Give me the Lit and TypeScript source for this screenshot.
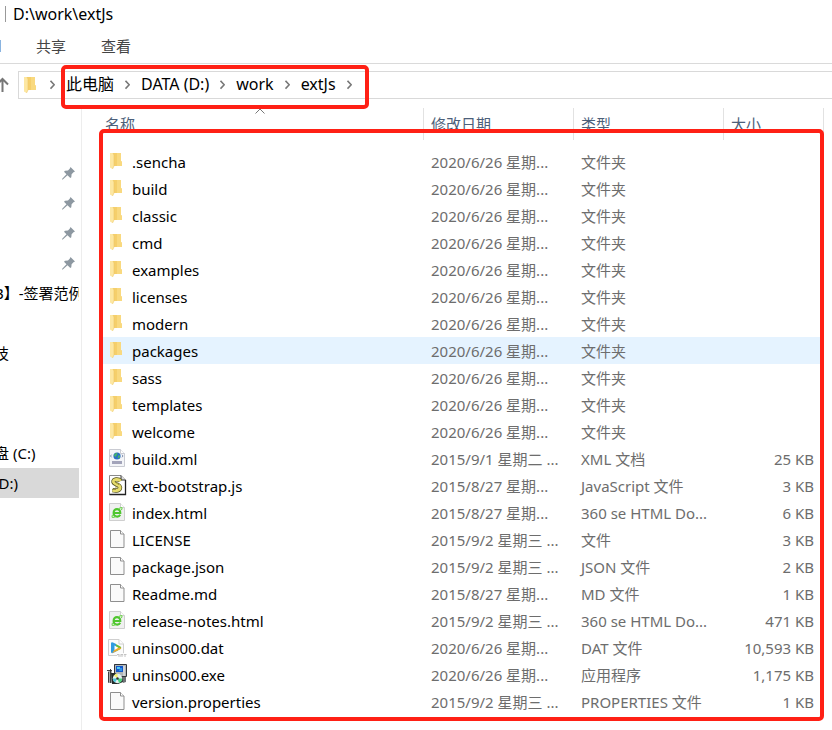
import { LitElement, html, css, svg, TemplateResult } from "lit";
import { customElement, property } from "lit/decorators.js";
import { classMap } from "lit/directives/class-map.js";

type Kind = "folder" | "xml" | "js" | "html" | "file" | "media" | "exe";

interface Entry {
  name: string;
  date: string;
  type: string;
  size?: string;
  kind: Kind;
  hover?: boolean;
}

const folder = (name: string, hover = false): Entry => ({
  name, date: "2020/6/26 星期...", type: "文件夹", kind: "folder", hover,
});

const ENTRIES: Entry[] = [
  folder(".sencha"),
  folder("build"),
  folder("classic"),
  folder("cmd"),
  folder("examples"),
  folder("licenses"),
  folder("modern"),
  folder("packages", true),
  folder("sass"),
  folder("templates"),
  folder("welcome"),
  { name: "build.xml", date: "2015/9/1 星期二 ...", type: "XML 文档", size: "25 KB", kind: "xml" },
  { name: "ext-bootstrap.js", date: "2015/8/27 星期...", type: "JavaScript 文件", size: "3 KB", kind: "js" },
  { name: "index.html", date: "2015/8/27 星期...", type: "360 se HTML Do...", size: "6 KB", kind: "html" },
  { name: "LICENSE", date: "2015/9/2 星期三 ...", type: "文件", size: "3 KB", kind: "file" },
  { name: "package.json", date: "2015/9/2 星期三 ...", type: "JSON 文件", size: "2 KB", kind: "file" },
  { name: "Readme.md", date: "2015/8/27 星期...", type: "MD 文件", size: "1 KB", kind: "file" },
  { name: "release-notes.html", date: "2015/9/2 星期三 ...", type: "360 se HTML Do...", size: "471 KB", kind: "html" },
  { name: "unins000.dat", date: "2020/6/26 星期...", type: "DAT 文件", size: "10,593 KB", kind: "media" },
  { name: "unins000.exe", date: "2020/6/26 星期...", type: "应用程序", size: "1,175 KB", kind: "exe" },
  { name: "version.properties", date: "2015/9/2 星期三 ...", type: "PROPERTIES 文件", size: "1 KB", kind: "file" },
];

const sheet = (stroke: string, fill: string) => svg`
  <path d="M2.5 1.5H13.5L17.5 5.5V18.5H2.5Z" fill=${fill} stroke=${stroke}/>
  <path d="M13.5 1.5V5.5H17.5" fill="#fff" stroke=${stroke}/>`;

const ICONS: Record<Kind, TemplateResult> = {
  folder: svg`
    <path d="M6 2H14V10L15 11V15H6Z" fill="#f5cf6b"/>
    <path d="M10 2H14V10L15 11V15H10Z" fill="#f9d97f"/>
    <path d="M3 2H6L7 4V15L5.500 18L3 16.500Z" fill="#fde7a2"/>
    <path d="M6 2L7 4V15L5.500 18" fill="none" stroke="#efc765" stroke-width=".6"/>`,
  xml: svg`
    ${sheet("#c9cbd2", "#f4f5f8")}
    <circle cx="10" cy="8" r="3.600" fill="#2b6fc4"/>
    <path d="M8 5.500L10.500 4.700L10 7L8.500 9L6.800 7.500ZM11.500 7L13.300 8L12 10.500L10.500 9.500Z" fill="#45b26c"/>
    <path d="M4.500 6.700L3.500 8L4.500 9.300M15 6.700L16 8L15 9.300" fill="none" stroke="#7f8fae"/>
    <path d="M5 13H15V16H5Z" fill="#a3a4ba"/>`,
  js: svg`
    <path d="M2.500.5H14L18.500 5V19.500H2.500Z" fill="#fff" stroke="#8a8a8a"/>
    <path d="M18.500 5V19.500H2.500" fill="none" stroke="#222" stroke-width="1.300"/>
    <path d="M14 .5V5H18.500" fill="#ddd" stroke="#333"/>
    <path d="M13.500 6C11.500 3.500 6 4 6.500 7C7 9.500 13 9.500 13 12.500C13 15.500 9.500 16 5.500 15.200" fill="none" stroke="#55531f" stroke-width="4.400"/>
    <path d="M13.500 6C11.500 3.500 6 4 6.500 7C7 9.500 13 9.500 13 12.500C13 15.500 9.500 16 5.500 15.200" fill="none" stroke="#e6dc6c" stroke-width="3"/>
    <path d="M8 7L12 9.800M8 12H11M5 14.500H9" stroke="#8a8438" stroke-width=".8"/>`,
  html: svg`
    ${sheet("#cfcfcf", "#f0f0f0")}
    <path d="M6.800 11H13.300C13.300 5.800 6.600 5.800 6.600 11C6.600 15.200 11.800 15.600 13.200 12.800" fill="none" stroke="#4fc62f" stroke-width="2.100"/>
    <path d="M5.500 13C4 16.500 7 15.500 8.500 14.500M12 6.500C15.500 4.500 15.500 6 14.300 8" fill="none" stroke="#6fd64e" stroke-width="1.100"/>`,
  file: svg`
    <path d="M3.500 1.500H13.500L17 5V18.500H3.500Z" fill="#fafafa" stroke="#8f8f8f"/>
    <path d="M13.500 1.500V5H17" fill="#fff" stroke="#8f8f8f"/>`,
  media: svg`
    <path d="M1.500 2.500H12L16.500 7V18.500H1.500Z" fill="#fbfbfb" stroke="#cfcfcf"/>
    <path d="M12 2.500V7H16.500" fill="#fff" stroke="#cfcfcf"/>
    <path d="M4 6.500Q4 4.800 6 5.400L9 7V14.400L6 16Q4 16.600 4 15Z" fill="#2f9be0"/>
    <path d="M6 5.400L13.500 9.500Q15 10.700 13.500 12L9 14.400V7Z" fill="#69bb3b"/>
    <path d="M5 16.200L13.500 12Q14.600 11.200 14.300 10.700L9 10.700Z" fill="#f2a92c"/>
    <path d="M7.500 8.500L11.300 10.700L7.500 13Z" fill="#fff"/>
    <path d="M10 16H20V20H10Z" fill="#fff" opacity=".8"/>
    <path d="M10 17.500H12.500M13.500 17.500H16M17 17.500H19.500M11 19H16M17 19H19" stroke="#c3c3c3"/>`,
  exe: svg`
    <path d="M7 0H19V12H7Z" fill="#aeb4b8"/>
    <path d="M7.500.5H19.500V12.500H7.500Z" fill="none" stroke="#30343a"/>
    <path d="M9 2H16V8H9Z" fill="#1257c8"/>
    <path d="M10 3H13V5H10Z" fill="#50cdf4"/>
    <path d="M13 4H15V7H12Z" fill="#2d93e8"/>
    <path d="M17 2V12" stroke="#f0f0f0"/>
    <path d="M1 7H5V19H1Z" fill="#a4a7aa"/>
    <path d="M0 6.500H5M3.500 5V19M1.500 8V18.500" stroke="#333" stroke-width=".9"/>
    <path d="M4 9H8L14 13H16V18L11 20H5Z" fill="#242a29"/>
    <circle cx="10.500" cy="14.500" r="4.700" fill="#e4f0ef"/>
    <path d="M10.500 14.500L7 11.400A4.700 4.700 0 0 1 10.500 9.800Z" fill="#f5ef64"/>
    <path d="M10.500 14.500L15.200 14.500A4.700 4.700 0 0 1 12 19Z" fill="#47d77c"/>
    <path d="M10.500 14.500L8 18.500A4.700 4.700 0 0 1 5.800 14.500Z" fill="#4cc4d9"/>
    <circle cx="10.500" cy="14.500" r="1.200" fill="#333"/>
    <path d="M15 13H19V18L16 19Z" fill="#6d7276"/>`,
};

@customElement("file-icon")
export class FileIcon extends LitElement {
  @property() kind: Kind = "file";
  static styles = css`
    :host { display: block; flex: none; width: 20px; height: 21px; }
    .icon { display: block; }
  `;
  render() {
    return html`<svg class="icon" width="20" height="21" viewBox="0 0 20 21" aria-hidden="true">${ICONS[this.kind]}</svg>`;
  }
}

const chevron = html`<svg class="chevron" width="5" height="10" viewBox="0 0 5 10" aria-hidden="true">
  <path d="M.5 .8L4.200 4.700L.5 8.600" fill="none" stroke="#777" stroke-width="1.600"/></svg>`;

const pin = html`<svg width="13" height="13" viewBox="0 0 13 13" aria-hidden="true">
  <path d="M8.500 0L13 4.500L11.500 5.200L9.600 7.200L9.300 10.200L8.300 11L5.500 8.300L.8 12.600L0 12.500L.2 11.700L4.500 7.300L2 4.700L3 3.700L6 3.400L7.700 1.700Z" fill="#8d98a1"/></svg>`;

@customElement("app-root")
export class AppRoot extends LitElement {
  static styles = css`
    :host {
      display: flex;
      flex-direction: column;
      min-height: 100vh;
      overflow: hidden;
      background: #fff;
      color: #000;
      font: 15px/20px "Noto Sans", "Noto Sans CJK SC", sans-serif;
    }
    button {
      appearance: none;
      margin: 0;
      padding: 0;
      border: 0;
      background: none;
      color: inherit;
      font: inherit;
      text-align: left;
      white-space: nowrap;
    }
    .title {
      display: flex;
      align-items: center;
      box-sizing: border-box;
      gap: 7px;
      height: 28px;
      padding: 0 0 1px 5px;
    }
    .title-rule { width: 1px; height: 16px; background: #999; }
    .title-text { margin: 0; font-size: 16px; font-weight: 400; }
    .tabs {
      display: flex;
      align-items: center;
      gap: 35px;
      height: 35px;
      border-bottom: 1px solid #dadada;
      color: #444;
    }
    .tab-edge { width: 1px; height: 12px; background: #8ab4e0; }
    .address-row {
      display: flex;
      align-items: center;
      gap: 9px;
      padding: 7px 0 9px;
    }
    .up { flex: none; width: 9px; height: 16px; }
    .address {
      flex: 1;
      display: flex;
      align-items: center;
      gap: 11px;
      height: 26px;
      padding-left: 5px;
      border: 1px solid #d9d9d9;
      border-right: 0;
      font-size: 16px;
    }
    .crumbs {
      position: relative;
      display: flex;
      align-items: center;
      gap: 11px;
      height: 26px;
    }
    .crumb { padding-bottom: 2px; }
    .crumbs::after, .list::after {
      content: "";
      position: absolute;
      border: 4px solid #ff2015;
      border-radius: 5px;
      pointer-events: none;
    }
    .crumbs::after { inset: -7px -17px -11px -5px; }
    .chevron, .folder { flex: none; display: block; }
    .body { flex: 1; display: flex; }
    .nav {
      flex: none;
      width: 81px;
      padding-top: 50px;
      border-right: 1px solid #ededed;
    }
    .nav-item {
      display: flex;
      align-items: center;
      box-sizing: border-box;
      width: 79px;
      height: 30px;
      overflow: hidden;
      text-indent: -6px;
    }
    .nav-item.pinned { justify-content: flex-end; padding-right: 4px; }
    .nav-item.current { background: #d9d9d9; }
    .nav-group { margin-bottom: 30px; }
    .nav-group.far { margin-bottom: 70px; }
    .main { flex: 1; min-width: 0; padding: 0 8px 9px 21px; }
    .list { position: relative; }
    .list::after { inset: 21px 0 -6px -4px; }
    .table { width: 100%; border-collapse: collapse; table-layout: fixed; }
    .c-mid { width: 150px; }
    .c-size { width: 100px; }
    th { padding: 0 0 8px; font-weight: 400; }
    .head {
      position: relative;
      display: block;
      width: 100%;
      height: 32px;
      padding-left: 7px;
      border-right: 1px solid #e2e2e2;
      color: #4c607a;
    }
    .head.sorted { width: calc(100% + 6px); margin-left: -6px; padding-left: 8px; }
    .caret { position: absolute; top: 0; left: calc(50% - 5px); }
    td { height: 27px; padding: 0 0 0 7px; color: #6d6d6d; white-space: nowrap; }
    td.name { padding-left: 4px; color: #000; }
    td.size { padding-right: 10px; text-align: right; }
    tr.hover { background: #e5f3ff; }
    .file { display: flex; align-items: center; gap: 5px; }
  `;

  render() {
    return html`
      <header class="title"><span class="title-rule"></span><h1 class="title-text">D:\\work\\extJs</h1></header>
      <div class="tabs">
        <span class="tab-edge"></span><button>共享</button><button>查看</button>
      </div>
      <div class="address-row">
        <button class="up" aria-label="向上">
          <svg width="9" height="16" viewBox="0 0 9 16"><path d="M2.500 15V2M-3 7.500L2.500 2L8 7.500" fill="none" stroke="#777" stroke-width="2"/></svg>
        </button>
        <div class="address">
          <svg class="folder" width="15" height="20" viewBox="3 0 15 20" aria-hidden="true">${ICONS.folder}</svg>
          ${chevron}
          <nav class="crumbs" aria-label="路径">
            ${["此电脑", "DATA (D:)", "work", "extJs"].map((c) => html`<button class="crumb">${c}</button>${chevron}`)}
          </nav>
        </div>
      </div>
      <div class="body">
        <nav class="nav" aria-label="导航">
          <div class="nav-group">
            ${[1, 2, 3, 4].map(() => html`<button class="nav-item pinned" aria-label="已固定">${pin}</button>`)}
            <button class="nav-item">B】-签署范例</button>
          </div>
          <div class="nav-group far"><button class="nav-item">技</button></div>
          <button class="nav-item">盘 (C:)</button>
          <button class="nav-item current">(D:)</button>
        </nav>
        <main class="main">
          <div class="list">
            <table class="table">
              <colgroup><col /><col class="c-mid" /><col class="c-mid" /><col class="c-size" /></colgroup>
              <thead>
                <tr>
                  <th scope="col"><button class="head sorted">名称
                    <svg class="caret" width="10" height="6" viewBox="0 0 10 6" aria-hidden="true"><path d="M.5 5.500L5 1L9.500 5.500" fill="none" stroke="#777"/></svg>
                  </button></th>
                  <th scope="col"><button class="head">修改日期</button></th>
                  <th scope="col"><button class="head">类型</button></th>
                  <th scope="col"><button class="head">大小</button></th>
                </tr>
              </thead>
              <tbody>
                ${ENTRIES.map((e) => html`
                  <tr class=${classMap({ hover: !!e.hover })}>
                    <td class="name"><div class="file"><file-icon .kind=${e.kind}></file-icon><span>${e.name}</span></div></td>
                    <td>${e.date}</td>
                    <td>${e.type}</td>
                    <td class="size">${e.size ?? ""}</td>
                  </tr>`)}
              </tbody>
            </table>
          </div>
        </main>
      </div>`;
  }
}
